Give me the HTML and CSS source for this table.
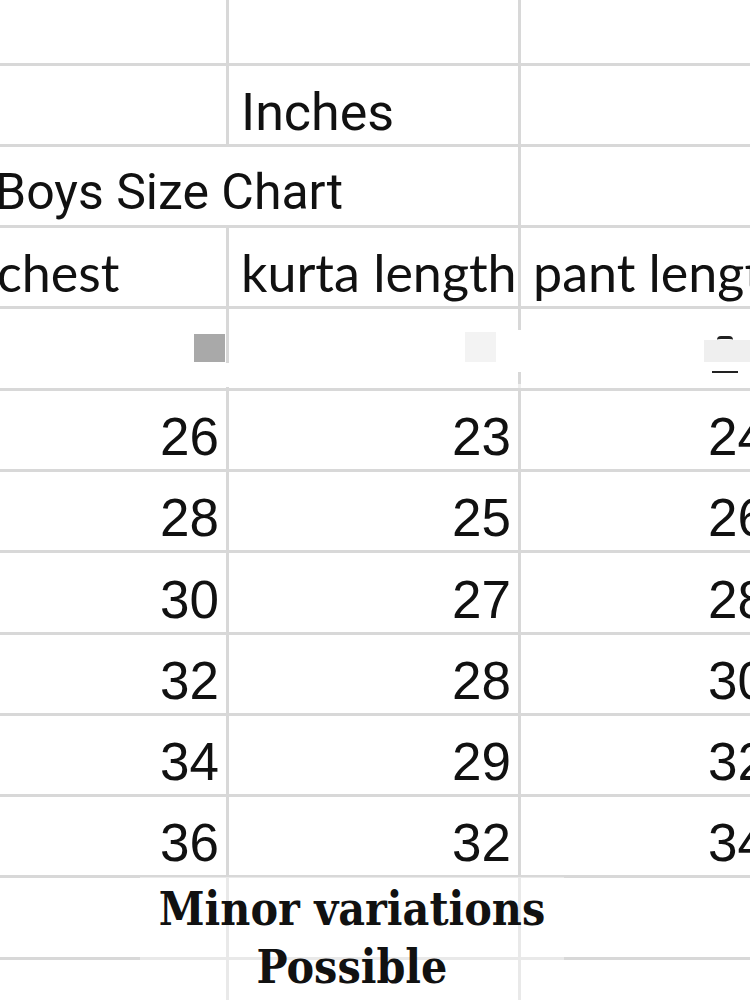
FILE: index.html
```html
<!DOCTYPE html>
<html lang="en">
<head>
<meta charset="utf-8">
<title>Boys Size Chart</title>
<link rel="stylesheet" href="styles.css">
</head>
<body>
<div class="page">
  <div class="sheet">
    <div class="cell"></div><div class="cell"></div><div class="cell"></div>
    <div class="cell"></div><div class="cell title">Inches</div><div class="cell"></div>
    <div class="cell title span2 boys">Boys Size Chart</div><div class="cell"></div>
    <div class="cell head">chest</div><div class="cell head">kurta length</div><div class="cell head">pant length</div>
    <div class="cell"></div><div class="cell"></div><div class="cell"></div>
    <div class="cell num">26</div><div class="cell num">23</div><div class="cell num">24</div>
    <div class="cell num">28</div><div class="cell num">25</div><div class="cell num">26</div>
    <div class="cell num">30</div><div class="cell num">27</div><div class="cell num">28</div>
    <div class="cell num">32</div><div class="cell num">28</div><div class="cell num">30</div>
    <div class="cell num">34</div><div class="cell num">29</div><div class="cell num">32</div>
    <div class="cell num">36</div><div class="cell num">32</div><div class="cell num">34</div>
    <div class="cell"></div><div class="cell"></div><div class="cell"></div>
    <div class="cell"></div><div class="cell"></div><div class="cell"></div>
  </div>

  <div class="patch patch-a"></div>
  <div class="patch patch-b"></div>
  <div class="patch patch-c"></div>
  <div class="blot blot-gray"></div>
  <div class="blot blot-light"></div>
  <div class="blot blot-right"></div>
  <div class="blot blot-dash"></div>
  <div class="blot blot-arc"></div>

  <div class="note">Minor variations<br>Possible</div>
</div>
</body>
</html>
```

FILE: styles.css
```css
html, body {
  margin: 0;
  padding: 0;
  background: #ffffff;
}

.page {
  position: relative;
  width: 750px;
  height: 1000px;
  overflow: hidden;
  background: #ffffff;
}

.sheet {
  display: grid;
  grid-template-columns: 244px 292px 256px;
  grid-auto-rows: 81.3px;
  width: 792px;
  margin: -15.8px 0 0 -15px;
}

.cell {
  box-sizing: border-box;
  border-right: 3px solid #d8d8d8;
  border-bottom: 3px solid #d8d8d8;
  display: flex;
  align-items: flex-end;
  padding: 0 7px 6px 12px;
  white-space: nowrap;
  color: #111111;
  min-width: 0;
}

.span2 {
  grid-column: span 2;
}

.title {
  font-family: Roboto, "Liberation Sans", sans-serif;
  font-size: 52px;
  line-height: 52px;
  padding-bottom: 5px;
}

.boys {
  font-size: 50px;
  line-height: 50px;
  padding-left: 10px;
  padding-bottom: 8px;
}

.head {
  font-family: Lato, "Open Sans", sans-serif;
  font-size: 52px;
  line-height: 52px;
  padding-bottom: 8px;
}

.num {
  justify-content: flex-end;
  font-family: "Liberation Sans", Arial, sans-serif;
  font-size: 53px;
  line-height: 53px;
  padding-bottom: 6px;
}

.patch {
  position: absolute;
  background: #ffffff;
}

.patch-a { left: 225px; top: 363px; width: 8px; height: 24px; }
.patch-b { left: 516px; top: 330px; width: 8px; height: 42px; }
.patch-c { left: 232px; top: 384px; width: 300px; height: 4px; background: rgba(255,255,255,0.6); }

.blot {
  position: absolute;
}

.blot-gray { left: 194px; top: 334px; width: 31px; height: 28px; background: #a9a9a9; }
.blot-light { left: 465px; top: 332px; width: 31px; height: 30px; background: #f3f3f3; }
.blot-right { left: 704px; top: 340px; width: 46px; height: 22px; background: #efefef; }
.blot-dash { left: 712px; top: 371px; width: 26px; height: 2px; background: #222222; }
.blot-arc { left: 717px; top: 336px; width: 16px; height: 4px; border-top: 3px solid #222; border-radius: 8px 8px 0 0; box-sizing: border-box; }

.note {
  position: absolute;
  left: 140px;
  top: 877px;
  width: 424px;
  height: 123px;
  padding-top: 3px;
  box-sizing: border-box;
  background: rgba(255, 255, 255, 0.45);
  text-align: center;
  font-family: "DejaVu Serif Condensed", "DejaVu Serif", serif;
  font-weight: bold;
  font-size: 46px;
  line-height: 58px;
  color: #111111;
}
```
